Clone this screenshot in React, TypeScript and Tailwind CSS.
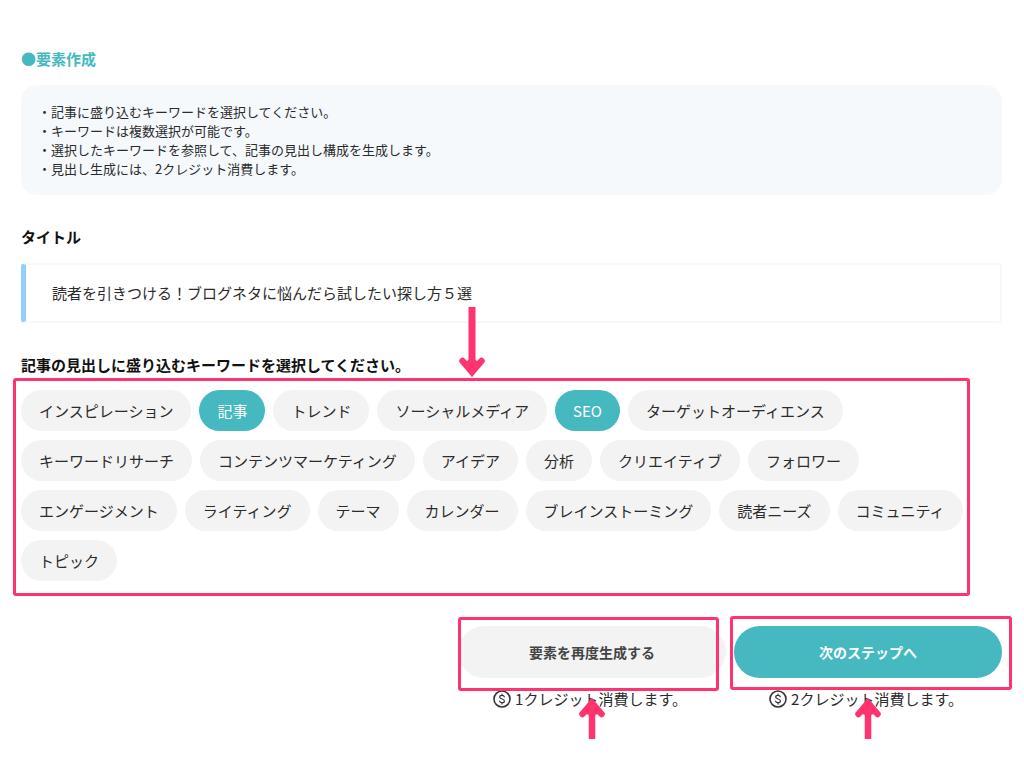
import React, { useState } from 'react';
import clsx from 'clsx';

const NOTES = [
  '・記事に盛り込むキーワードを選択してください。',
  '・キーワードは複数選択が可能です。',
  '・選択したキーワードを参照して、記事の見出し構成を生成します。',
  '・見出し生成には、2クレジット消費します。',
];

const KEYWORDS = [
  'インスピレーション',
  '記事',
  'トレンド',
  'ソーシャルメディア',
  'SEO',
  'ターゲットオーディエンス',
  'キーワードリサーチ',
  'コンテンツマーケティング',
  'アイデア',
  '分析',
  'クリエイティブ',
  'フォロワー',
  'エンゲージメント',
  'ライティング',
  'テーマ',
  'カレンダー',
  'ブレインストーミング',
  '読者ニーズ',
  'コミュニティ',
  'トピック',
];

interface KeywordChipProps {
  label: string;
  selected: boolean;
  onToggle: () => void;
}

function KeywordChip({ label, selected, onToggle }: KeywordChipProps) {
  return (
    <button
      type="button"
      aria-pressed={selected}
      onClick={onToggle}
      className={clsx(
        'h-[41px] rounded-full px-[18px] whitespace-nowrap',
        selected ? 'bg-[#45b9bf] text-white' : 'bg-[#f3f3f3] text-[#2b2b2b]'
      )}
    >
      {label}
    </button>
  );
}

interface CreditNoteProps {
  text: string;
}

function CreditNote({ text }: CreditNoteProps) {
  return (
    <p className="flex items-center justify-center gap-1 pr-1">
      <svg viewBox="0 0 18 18" className="size-[18px] shrink-0" fill="none" stroke="#333" aria-hidden="true">
        <circle cx="9" cy="9" r="8" strokeWidth="1.6" />
        <path
          d="M11.3 6.8C11 5.9 10.2 5.4 9 5.4c-1.4 0-2.3.7-2.3 1.7 0 2.4 4.7 1.3 4.7 3.8 0 1.1-1 1.8-2.4 1.8-1.3 0-2.2-.5-2.5-1.5M9 4v1.4M9 12.7v1.4"
          strokeWidth="1.2"
          strokeLinecap="round"
        />
      </svg>
      {text}
    </p>
  );
}

// pink highlight box drawn over the controls
function Highlight({ className }: { className: string }) {
  return <div className={clsx('pointer-events-none absolute rounded-[3px] border-3 border-[#ff336f]', className)} />;
}

function ArrowDown({ className }: { className: string }) {
  return (
    <svg viewBox="0 0 28 72" className={clsx('pointer-events-none absolute', className)} aria-hidden="true">
      <g fill="none" stroke="#ff336f">
        <path d="M14 0V62" strokeWidth="7" />
        <path d="M4.500 54L14 65L23.500 54" strokeWidth="6.500" strokeLinecap="round" />
      </g>
      <path d="M5 55L11 53H17L23 55L14 70Z" fill="#ff336f" />
    </svg>
  );
}

function ArrowUp({ className }: { className: string }) {
  return (
    <svg viewBox="0 0 28 42" className={clsx('pointer-events-none absolute', className)} aria-hidden="true">
      <g fill="none" stroke="#ff336f">
        <path d="M14 42V8" strokeWidth="6.500" />
        <path d="M4.500 17L14 6L23.500 17" strokeWidth="6.500" strokeLinecap="round" />
      </g>
      <path d="M5 16L11 18H17L23 16L14 1Z" fill="#ff336f" />
    </svg>
  );
}

export default function App() {
  const [selected, setSelected] = useState<string[]>(['記事', 'SEO']);

  const toggle = (keyword: string) => {
    setSelected((prev) =>
      prev.includes(keyword) ? prev.filter((k) => k !== keyword) : [...prev, keyword]
    );
  };

  return (
    <main className="flex min-h-screen flex-col gap-[30px] bg-white pt-[47px] pr-[22px] pb-7 pl-[21px] font-['Noto_Sans_CJK_JP',sans-serif] text-[15px] leading-6 text-[#2b2b2b]">
      <section className="flex flex-col gap-[14px]">
        <h1 className="font-bold text-[#45b9bf]">●要素作成</h1>
        <ul className="rounded-2xl bg-[#f5f9fc] p-[17px] text-[13px] leading-[19px]">
          {NOTES.map((note) => (
            <li key={note}>{note}</li>
          ))}
        </ul>
      </section>

      <section className="flex flex-col gap-[14px]">
        <h2 className="font-bold text-[#111]">タイトル</h2>
        <p className="rounded border-2 border-l-[5px] border-[#f7f8f9] border-l-[#90cfff] py-4 pl-[26px]">
          読者を引きつける！ブログネタに悩んだら試したい探し方５選
        </p>
      </section>

      <section className="flex flex-col gap-[13px]">
        <h2 className="font-bold text-[#111]">記事の見出しに盛り込むキーワードを選択してください。</h2>
        <div className="relative flex flex-wrap gap-x-2 gap-y-[9px]">
          {KEYWORDS.map((keyword) => (
            <KeywordChip
              key={keyword}
              label={keyword}
              selected={selected.includes(keyword)}
              onToggle={() => toggle(keyword)}
            />
          ))}
          <Highlight className="-top-3 right-8 -bottom-[15px] -left-2" />
          <ArrowDown className="-top-[83px] left-[437px] h-[72px] w-7" />
        </div>
      </section>

      <div className="flex justify-end gap-2 pt-[15px]">
        <div className="relative flex w-[268px] flex-col gap-[9px]">
          <button type="button" className="h-[52px] rounded-full bg-[#f3f3f3] text-[14px] font-bold text-[#444]">
            要素を再度生成する
          </button>
          <CreditNote text="1クレジット消費します。" />
          <Highlight className="-top-[9px] right-[7px] left-0 h-[74px]" />
          <ArrowUp className="bottom-[-28px] left-1/2 h-[42px] w-7 -translate-x-1/2" />
        </div>
        <div className="relative flex w-[268px] flex-col gap-[9px]">
          <button type="button" className="h-[52px] rounded-full bg-[#45b9bf] text-[14px] font-bold text-white">
            次のステップへ
          </button>
          <CreditNote text="2クレジット消費します。" />
          <Highlight className="-top-[10px] -right-[10px] -left-1 h-[74px]" />
          <ArrowUp className="bottom-[-28px] left-1/2 h-[42px] w-7 -translate-x-1/2" />
        </div>
      </div>
    </main>
  );
}
